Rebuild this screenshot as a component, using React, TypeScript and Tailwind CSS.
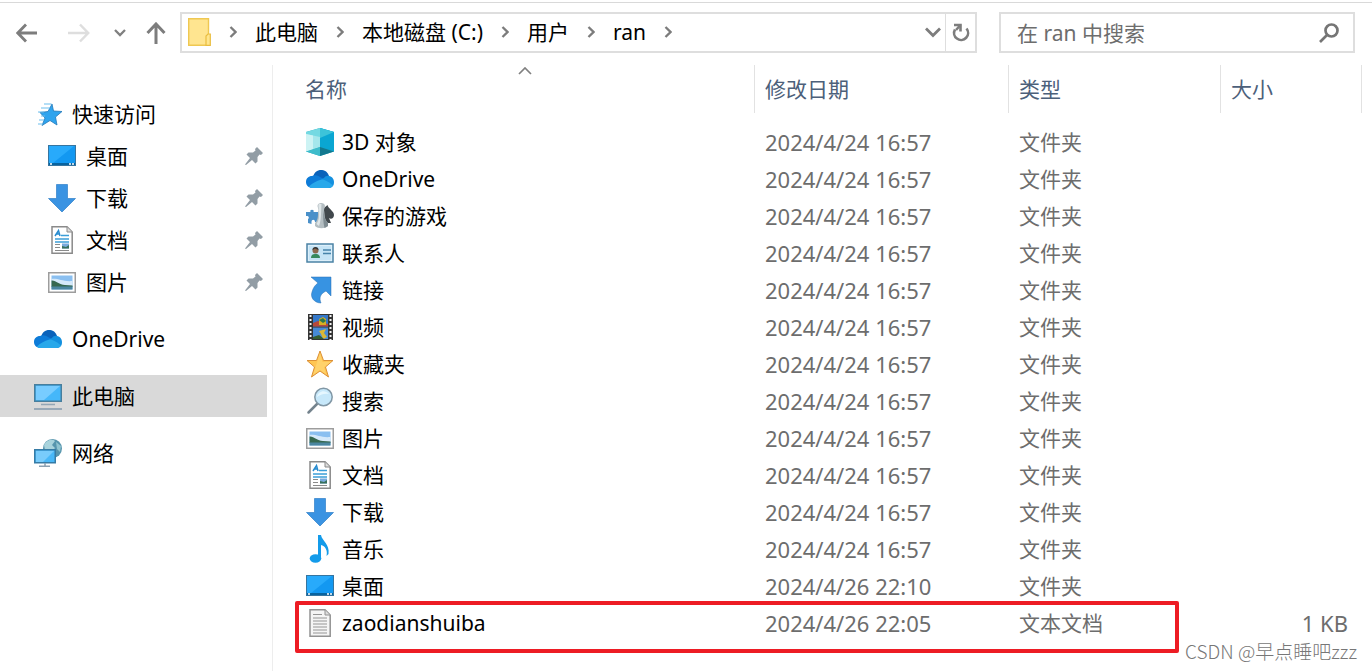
import React from 'react';

type IconName =
  | 'cube' | 'cloud' | 'games' | 'contact' | 'link' | 'video' | 'favorite' | 'search'
  | 'picture' | 'document' | 'download' | 'music' | 'desktop' | 'text' | 'quick' | 'computer' | 'network';

const drawings: Record<IconName, React.ReactNode> = {
  cube: (
    <>
      <path d="M14 0 28 4V23.500L14 28 0 23.500V4Z" fill="#22a9bf" />
      <path d="M0 4 14 0V19L0 23.500Z" fill="#74d9e2" />
      <path d="M0 6 14 9V19L0 23.500Z" fill="#a5e7ec" />
      <path d="M0 6 7 7.500V21.200L0 23.500Z" fill="#cdf3f4" />
      <path d="M14 0 28 4V23.500L14 19Z" fill="#0aa6d2" />
      <path d="M14 0 28 4 14 10Z" fill="#3cc3d9" />
      <path d="M0 23.500 14 19V28Z" fill="#3fbccb" />
      <path d="M14 19 28 23.500 14 28Z" fill="#12788f" />
    </>
  ),
  cloud: (
    <>
      <path d="M7 12C8 7 12 4.500 16 5C20 5.500 22 8 23 11L18 17 9 15Z" fill="#0a62ba" />
      <path d="M6 11C9 9.500 12 10.500 14 12L20 15 6 23C2 22.500 0 20 0 17C0 13.500 2.500 11 6 11Z" fill="#0d7bd8" />
      <path d="M18 13C19 11.500 21 10.500 23 11C26 11.500 28 14 28 17C28 21 26 23 22 23L14 15Z" fill="#1490df" />
      <path d="M3 21.500C6 18 12 15 17 14.500C21 16 25 18.500 27 20.500C26 22 24.500 23 22 23H6C4.500 23 3.600 22.400 3 21.500Z" fill="#28a8ea" />
    </>
  ),
  games: (
    <>
      <path d="M21.500 3C22.500 7 28 9 28 13C28 16.500 25 17.500 23 16L25 21H18V6Z" fill="#41484c" />
      <path d="M0 10H4.500C3 7 9 7 7.500 10H12V20H9C9 17 5.500 17 5.500 20V22L2 21V17C3.500 16 3 13.500 0 14Z" fill="#4a90c9" />
      <path d="M11.500 4C11.500 0 19 0 19 4L18 8C19 13 18 17 22 21V24C19 27 12 27 9 24V21C13 17 11.500 12 12.500 8Z" fill="#b4bec2" />
      <path d="M13 2C11.500 4 13.500 7 13 10C13 16 13 18 10.500 22L13 24C15.500 18 15 8 15.500 2Z" fill="#dfe6e8" />
      <path d="M17.500 8C18 13 18 17 22 21V24L18.500 26C17 20 17 14 17.500 8Z" fill="#7f8c92" />
    </>
  ),
  contact: (
    <>
      <rect x="1" y="5" width="26" height="18" fill="#dceffa" stroke="#4b83a5" strokeWidth="1.500" />
      <rect x="3" y="7" width="22" height="14" fill="#c5e4f6" />
      <path d="M5 19C5 15 8 15 10 15C12 15 14 16 14 19Z" fill="#37895f" />
      <circle cx="9.500" cy="11.500" r="3" fill="#8c684e" />
      <path d="M6.500 11C6 7 13 7 12.500 11L9 9.500Z" fill="#333" />
      <path d="M17 11H25M17 14.500H25" stroke="#4683aa" strokeWidth="1.500" />
    </>
  ),
  link: (
    <path d="M5 1H25V20L20 15C14 18 13 22 15 27C8 27 4 21 6 16C7 12 9 9 12 7Z" fill="#3793e2" stroke="#286fb2" strokeWidth="0.500" />
  ),
  video: (
    <>
      <rect x="2" y="1" width="25" height="26" fill="#343434" />
      <rect x="7" y="2" width="15" height="11.500" fill="#3478c9" />
      <rect x="7" y="14.500" width="15" height="11.500" fill="#468ad6" />
      <path d="M7 10 12 8 22 11V13.500H7Z" fill="#b8493b" />
      <path d="M13 12V6L17 4 20 6V12Z" fill="#d7af24" />
      <path d="M13 7 17 5 20 8 17 10Z" fill="#2d784d" />
      <path d="M13 18 20 16 18 20 21 24 17 26 15 21Z" fill="#dab735" />
      <path d="M7 24 13 22 18 26H7Z" fill="#345d31" />
      <path d="M4.500 2V27M24.500 2V27" stroke="#f4f4f4" strokeWidth="2" strokeDasharray="2 2" />
    </>
  ),
  favorite: (
    <>
      <path d="M14 1 17.500 10.500H27L19.500 17 22.500 27 14 21 5.500 27 8.500 17 1 10.500H10.500Z" fill="#ffc653" stroke="#dc9137" strokeWidth="1" />
      <path d="M14 3 16.500 12H25L18 17 20 24 14 20 7 25Z" fill="#ffda7b" opacity="0.600" />
    </>
  ),
  search: (
    <>
      <path d="M11 17 2.500 25.500" stroke="#74838d" strokeWidth="2.500" strokeLinecap="round" />
      <circle cx="17.500" cy="10" r="8.700" fill="#c7e8fa" stroke="#8197a5" strokeWidth="1.500" />
      <path d="M11 10C12 4 19 2 23 7C18 6 14 8 11 10Z" fill="#e6f7ff" />
    </>
  ),
  picture: (
    <>
      <rect x="0.750" y="4.750" width="26.500" height="19.500" fill="#fff" stroke="#9d9d9d" strokeWidth="1.500" />
      <rect x="3.500" y="7.500" width="21" height="14" fill="#8abff0" />
      <path d="M3.500 11C10 10 15 14 24.500 13V18H3.500Z" fill="#d5e9fa" />
      <path d="M3.500 12.500C8 12 11 17 17 17L24.500 17.500V19H3.500Z" fill="#366850" />
      <rect x="3.500" y="18.500" width="21" height="3" fill="#4b86a0" />
    </>
  ),
  document: (
    <>
      <path d="M4 .8H19L24.200 6V27.200H4Z" fill="#fff" stroke="#8a8a8a" strokeWidth="1.500" />
      <path d="M19 1V6H24" fill="#ddd" stroke="#8a8a8a" />
      <path d="M7 10 10.500 4.500 12 10M8 8H12" fill="none" stroke="#278bcf" strokeWidth="1.500" />
      <path d="M13 9.500H21M7 13H21M7 16H21" stroke="#3c9ed8" strokeWidth="1.500" />
      <path d="M7 18.500H12M7 21.500H12M7 24.500H21" stroke="#8a8a8a" />
      <rect x="14" y="17.500" width="7" height="5" fill="#78aadd" />
      <path d="M14 20 18 21 21 19V22.500H14Z" fill="#38705b" />
    </>
  ),
  download: <path d="M8.500 .5H19.500V14.500H27.500L14 28 .5 14.500H8.500Z" fill="#3a93e2" stroke="#2f7fc8" strokeWidth="0.700" />,
  music: (
    <>
      <path d="M12 0H15C16 6 24 9 22.500 19L20.500 21C22 15 19 11 15 10V22H12Z" fill="#139bea" />
      <ellipse cx="9.500" cy="23.500" rx="5.800" ry="4.200" fill="#139bea" />
    </>
  ),
  desktop: (
    <>
      <rect x="0.500" y="3.500" width="27" height="20" fill="#1398f1" stroke="#3675a0" />
      <path d="M1 4H26L5 21H1Z" fill="#28aafb" />
      <path d="M1 22H27" stroke="#08639f" strokeWidth="2" />
      <path d="M2 22H4M21 22H23M24 22H26" stroke="#fff" strokeWidth="1.500" />
    </>
  ),
  text: (
    <>
      <path d="M4 .8H19L24.200 6V27.200H4Z" fill="#f5f5f5" stroke="#929292" strokeWidth="1.500" />
      <path d="M19 1V6H24" fill="#ddd" stroke="#929292" />
      <path d="M7 5.500H16M7 9H21M7 12H21M7 15H21M7 18H21M7 21H21M7 24H21" stroke="#969696" strokeWidth="1.200" />
    </>
  ),
  quick: (
    <>
      <path d="M18 4 19.500 11 28 11.500 21.500 17 23 25 16 20.500 8 25.500 11 18 6 12.500 14 11.500Z" fill="#2fa4ee" stroke="#2278b9" strokeWidth="0.800" />
      <path d="M10 4H17.500M7 8H16M4 12H10M7 16H11M5 20H10M4 24H9" stroke="#6bbdee" strokeWidth="1.200" />
    </>
  ),
  computer: (
    <>
      <rect x="0.750" y="2.750" width="26.500" height="16.500" fill="#45b7fa" stroke="#477e9d" strokeWidth="1.500" />
      <path d="M2 4H26L10 18H2Z" fill="#78ccff" />
      <path d="M7 22.500H21" stroke="#93a6b5" strokeWidth="1.500" />
      <path d="M0 27H28" stroke="#8298ac" strokeWidth="1.500" />
    </>
  ),
  network: (
    <>
      <circle cx="18.500" cy="9.500" r="9.500" fill="#5795ad" />
      <path d="M10 6C13 0 19 0 21 2L18 6 21 9 17 14 11 11Z" fill="#a9d3dc" />
      <path d="M22 3 27 7 26 13 23 10Z" fill="#8fc3d0" />
      <rect x="0.750" y="10.750" width="20.500" height="13" fill="#49b8f8" stroke="#367ba5" strokeWidth="1.500" />
      <path d="M2 12H20L9 23H2Z" fill="#79ccfb" />
      <path d="M11 24V27M5 27.300H16" stroke="#8ba0b1" strokeWidth="1.500" />
    </>
  ),
};

function Icon({ name }: { name: IconName }) {
  return (
    <svg viewBox="0 0 28 28" className="size-7 shrink-0" aria-hidden="true">
      {drawings[name]}
    </svg>
  );
}

function Pin() {
  return (
    <svg viewBox="0 0 18 18" className="ml-auto size-[18px] shrink-0" aria-hidden="true">
      <path d="M12 0 18 6 16 8 14.500 7.500 12.500 10 12.500 14.500 10.500 16.500 7 13 1 18 0 17.500 5 11 1.500 7.500 3.500 5.500 8 5.500 10.500 3.500 10 2Z" fill="#929da5" />
    </svg>
  );
}

function Crumb() {
  return (
    <svg viewBox="0 0 8 12" className="h-3 w-2 shrink-0" fill="none" stroke="#7c7c7c" strokeWidth="2.300" aria-hidden="true">
      <path d="M1.500 1 6.500 6 1.500 11" />
    </svg>
  );
}

const quickItems: { name: string; icon: IconName }[] = [
  { name: '桌面', icon: 'desktop' },
  { name: '下载', icon: 'download' },
  { name: '文档', icon: 'document' },
  { name: '图片', icon: 'picture' },
];

const folderDate = '2024/4/24 16:57';
const files: { name: string; icon: IconName; date: string; type: string; size: string }[] = [
  { name: '3D 对象', icon: 'cube', date: folderDate, type: '文件夹', size: '' },
  { name: 'OneDrive', icon: 'cloud', date: folderDate, type: '文件夹', size: '' },
  { name: '保存的游戏', icon: 'games', date: folderDate, type: '文件夹', size: '' },
  { name: '联系人', icon: 'contact', date: folderDate, type: '文件夹', size: '' },
  { name: '链接', icon: 'link', date: folderDate, type: '文件夹', size: '' },
  { name: '视频', icon: 'video', date: folderDate, type: '文件夹', size: '' },
  { name: '收藏夹', icon: 'favorite', date: folderDate, type: '文件夹', size: '' },
  { name: '搜索', icon: 'search', date: folderDate, type: '文件夹', size: '' },
  { name: '图片', icon: 'picture', date: folderDate, type: '文件夹', size: '' },
  { name: '文档', icon: 'document', date: folderDate, type: '文件夹', size: '' },
  { name: '下载', icon: 'download', date: folderDate, type: '文件夹', size: '' },
  { name: '音乐', icon: 'music', date: folderDate, type: '文件夹', size: '' },
  { name: '桌面', icon: 'desktop', date: '2024/4/26 22:10', type: '文件夹', size: '' },
  { name: 'zaodianshuiba', icon: 'text', date: '2024/4/26 22:05', type: '文本文档', size: '1 KB' },
];

function Toolbar() {
  return (
    <header className="mt-0.5 flex items-center border-t border-[#d9d9d9] pt-[9px] pr-[17px] pb-3 pl-4">
      <nav aria-label="导航" className="flex items-center">
        <button type="button" aria-label="后退">
          <svg viewBox="0 0 22 20" className="h-5 w-[22px]" fill="none" stroke="#7d7d7d" strokeWidth="2.800">
            <path d="M21 10H2M10 1.500 1.800 10 10 18.500" />
          </svg>
        </button>
        <button type="button" aria-label="前进" disabled className="ml-[30px]">
          <svg viewBox="0 0 22 20" className="h-5 w-[22px]" fill="none" stroke="#dedede" strokeWidth="2.500">
            <path d="M0 10H20M12 1.500 20.200 10 12 18.500" />
          </svg>
        </button>
        <button type="button" aria-label="最近位置" className="ml-6">
          <svg viewBox="0 0 12 8" className="h-2 w-3" fill="none" stroke="#808080" strokeWidth="2.300">
            <path d="M1 1 6 6 11 1" />
          </svg>
        </button>
        <button type="button" aria-label="上移" className="ml-5">
          <svg viewBox="0 0 20 22" className="h-[22px] w-5" fill="none" stroke="#7d7d7d" strokeWidth="3">
            <path d="M10 22V2M1.500 11 10 2 18.500 11" />
          </svg>
        </button>
      </nav>
      <div className="ml-3.5 flex h-[41px] min-w-0 flex-1 items-stretch border-2 border-[#dedede]">
        <div className="flex min-w-0 flex-1 items-center gap-[18px] pb-0.5 pl-1.5 whitespace-nowrap">
          <svg viewBox="0 0 23 28" className="h-7 w-[23px] shrink-0" aria-hidden="true">
            <path d="M.7 .7H20.500V27.300H.7Z" fill="#ffe590" stroke="#efc852" strokeWidth="1.400" />
            <path d="M18 27.300V18L20 16H22.300V27.300Z" fill="#ffe68e" stroke="#e9bd40" strokeWidth="1.200" />
          </svg>
          <Crumb />
          <a href="#pc">此电脑</a>
          <Crumb />
          <a href="#c">本地磁盘 (C:)</a>
          <Crumb />
          <a href="#users">用户</a>
          <Crumb />
          <a href="#ran">ran</a>
          <Crumb />
        </div>
        <button type="button" aria-label="历史地址" className="px-1">
          <svg viewBox="0 0 16 11" className="h-[11px] w-4" fill="none" stroke="#7d7d7d" strokeWidth="2.800">
            <path d="M1 1.500 8 8.500 15 1.500" />
          </svg>
        </button>
        <button type="button" aria-label="刷新" className="flex w-[30px] items-center justify-center border-l border-[#dedede]">
          <svg viewBox="0 0 18 20" className="h-5 w-[18px]" fill="none" stroke="#7d7d7d" strokeWidth="2.600">
            <path d="M14.500 5.500A7 7 0 1 1 3 6.500M2 2H8.500V8.500" />
            <path d="M8.500 2 4 7" />
          </svg>
        </button>
      </div>
      <label className="ml-[22px] flex h-[41px] w-[356px] items-center border-2 border-[#dedede] pr-3.5 pl-4">
        <input aria-label="搜索" placeholder="在 ran 中搜索" className="min-w-0 flex-1 bg-transparent outline-none placeholder:text-[#6d6d6d]" />
        <svg viewBox="0 0 20 20" className="size-5" fill="none" stroke="#757575" strokeWidth="2.700" aria-hidden="true">
          <circle cx="12.500" cy="7.500" r="6" />
          <path d="M8 12 1 19" />
        </svg>
      </label>
    </header>
  );
}

function Sidebar() {
  const row = 'flex h-[42px] items-center gap-2.5 pl-[34px]';
  return (
    <nav aria-label="文件夹" className="flex w-[273px] shrink-0 flex-col gap-[15px] border-r border-[#ededed] pt-7 pr-[5px]">
      <div>
        <a href="#quick" className={row}>
          <Icon name="quick" />
          快速访问
        </a>
        <ul>
          {quickItems.map((item) => (
            <li key={item.name}>
              <a href={'#' + item.icon} className="flex h-[42px] items-center gap-2.5 pr-1 pl-12">
                <Icon name={item.icon} />
                {item.name}
                <Pin />
              </a>
            </li>
          ))}
        </ul>
      </div>
      <a href="#onedrive" className={row}>
        <Icon name="cloud" />
        OneDrive
      </a>
      <a href="#pc" aria-current="page" className={row + ' bg-[#d9d9d9]'}>
        <Icon name="computer" />
        此电脑
      </a>
      <a href="#network" className={row}>
        <Icon name="network" />
        网络
      </a>
    </nav>
  );
}

function FileList() {
  const head = 'flex h-12 w-full items-center border-r border-[#e2e2e2] pl-2.5 text-left';
  return (
    <main className="relative min-w-0 flex-1 pr-2.5 pl-[22px]">
      <table className="w-full table-fixed border-collapse">
        <colgroup>
          <col />
          <col className="w-[254px]" />
          <col className="w-[212px]" />
          <col className="w-[141px]" />
        </colgroup>
        <thead className="text-[#4c607a]">
          <tr>
            <th className="relative p-0 pb-2.5 font-normal">
              <button type="button" className={head}>
                名称
              </button>
              <svg viewBox="0 0 14 8" className="absolute top-0.5 left-1/2 h-2 w-3.5 -translate-x-1/2" fill="none" stroke="#808080" strokeWidth="1.700" aria-hidden="true">
                <path d="M1 7 7 1 13 7" />
              </svg>
            </th>
            {['修改日期', '类型', '大小'].map((label) => (
              <th key={label} className="p-0 pb-2.5 font-normal">
                <button type="button" className={head}>
                  {label}
                </button>
              </th>
            ))}
          </tr>
        </thead>
        <tbody className="text-[#6d6d6d]">
          {files.map((file) => (
            <tr key={file.name} className="h-[37px]">
              <td className="p-0 pl-[11px] text-black">
                <div className="flex items-center gap-2">
                  <Icon name={file.icon} />
                  {file.name}
                </div>
              </td>
              <td className="p-0 pl-2.5 text-[22px]">{file.date}</td>
              <td className="p-0 pl-2.5">{file.type}</td>
              <td className="p-0 pr-3.5 text-right text-[22px]">{file.size}</td>
            </tr>
          ))}
        </tbody>
      </table>
      <div className="pointer-events-none absolute top-[536px] right-[193px] left-[22px] h-[52px] rounded-xs border-4 border-[#ed1c24]" />
    </main>
  );
}

export default function App() {
  return (
    <div className="relative flex min-h-screen flex-col overflow-hidden bg-white font-['Noto_Sans','Noto_Sans_CJK_SC',sans-serif] text-[21px] leading-7 text-black">
      <Toolbar />
      <div className="flex flex-1">
        <Sidebar />
        <FileList />
      </div>
      <div className="absolute right-[15px] bottom-1.5 font-['Noto_Sans_CJK_SC',sans-serif] text-[19px] leading-7 font-light text-[#777777]">
        CSDN @早点睡吧zzz
      </div>
    </div>
  );
}
